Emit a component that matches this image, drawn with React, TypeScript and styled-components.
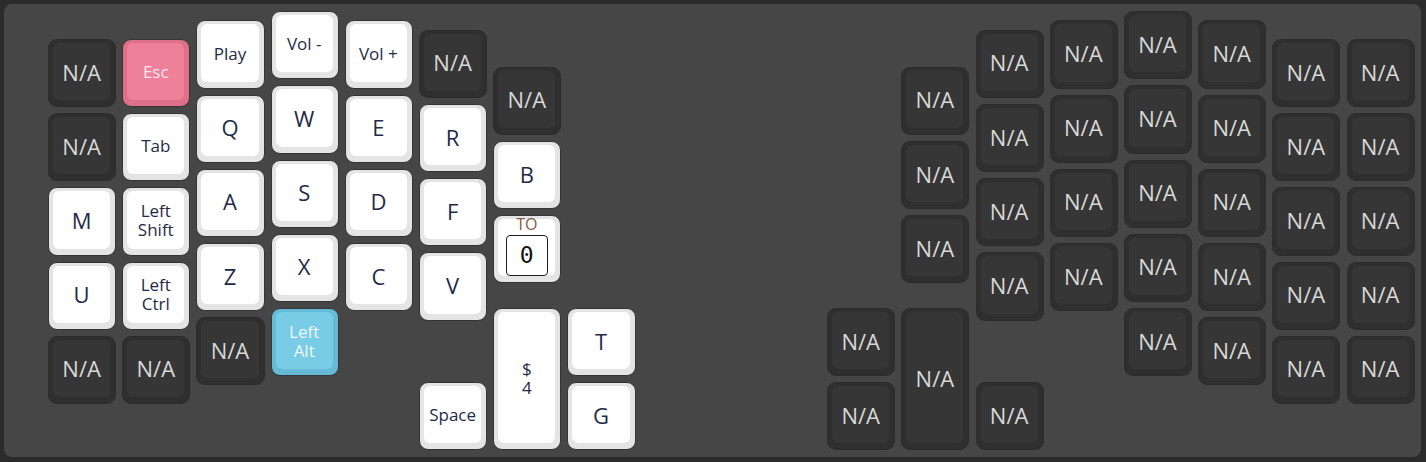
import React from "react";
import styled, { createGlobalStyle, css } from "styled-components";

const GlobalStyle = createGlobalStyle`
  html, body {
    margin: 0;
    padding: 0;
    background: #2b2b2b;
  }
  body {
    font-family: "Open Sans", "Lato", sans-serif;
  }
`;

const UNIT = 74.2;
const GAP = 6;

type Tone = "dark" | "light" | "pink" | "blue";

interface KeyDef {
  c: number;
  r: number;
  h?: number;
  label?: string;
  tone?: Tone;
  small?: boolean;
  layer?: string;
}

const tones = {
  dark: { ring: "#2f2f2f", face: "#363636", text: "#d8d8d8", edge: "#2c2c2c" },
  light: { ring: "#e4e4e4", face: "#ffffff", text: "#1f2a48", edge: "#343434" },
  pink: { ring: "#de7189", face: "#ee8199", text: "#fce6eb", edge: "#3a3435" },
  blue: { ring: "#66bad6", face: "#78cce6", text: "#eef8fc", edge: "#34393b" },
};

const Board = styled.div`
  position: relative;
  margin: 4px;
  width: 1417px;
  height: 453px;
  background: #464646;
  border-radius: 8px;
  overflow: hidden;
`;

const Key = styled.div<{ $tone: Tone }>`
  position: absolute;
  box-sizing: border-box;
  border-radius: 9px;
  padding: 3px 5px 6px 4px;
  ${({ $tone }) => css`
    background: ${tones[$tone].ring};
    border: 1px solid ${tones[$tone].edge};
    color: ${tones[$tone].text};
  `}
`;

const Face = styled.div<{ $tone: Tone; $small?: boolean }>`
  height: 100%;
  border-radius: 6px;
  background: ${({ $tone }) => tones[$tone].face};
  display: flex;
  flex-direction: column;
  align-items: center;
  justify-content: center;
  text-align: center;
  white-space: pre-line;
  font-size: ${({ $small }) => ($small ? "17px" : "22px")};
  line-height: ${({ $small }) => ($small ? "19px" : "26px")};
`;

const LayerName = styled.span`
  font-size: 16px;
  line-height: 17px;
  color: #7d5c46;
  margin-top: -4px;
`;

const LayerBox = styled.span`
  box-sizing: border-box;
  width: 42px;
  height: 41px;
  margin-top: 2px;
  border: 1px solid #1e1e1e;
  border-radius: 4px;
  background: #ffffff;
  display: flex;
  align-items: center;
  justify-content: center;
  font-family: "DejaVu Sans Mono", "Liberation Mono", monospace;
  font-size: 23px;
  color: #111;
`;

const na = (c: number, r: number, h?: number): KeyDef => ({ c, r, h, label: "N/A", tone: "dark" });
const k = (c: number, r: number, label: string, small = false, tone: Tone = "light"): KeyDef => ({
  c,
  r,
  label,
  small,
  tone,
});

const keys: KeyDef[] = [
  // left half
  na(0, 0), na(0, 1), k(0, 2, "M"), k(0, 3, "U"), na(0, 4),
  k(1, 0, "Esc", true, "pink"), k(1, 1, "Tab", true), k(1, 2, "Left\nShift", true), k(1, 3, "Left\nCtrl", true), na(1, 4),
  k(2, -0.25, "Play", true), k(2, 0.75, "Q"), k(2, 1.75, "A"), k(2, 2.75, "Z"), na(2, 3.75),
  k(3, -0.375, "Vol -", true), k(3, 0.625, "W"), k(3, 1.625, "S"), k(3, 2.625, "X"), k(3, 3.625, "Left\nAlt", true, "blue"),
  k(4, -0.25, "Vol +", true), k(4, 0.75, "E"), k(4, 1.75, "D"), k(4, 2.75, "C"),
  na(5, -0.125), k(5, 0.875, "R"), k(5, 1.875, "F"), k(5, 2.875, "V"), k(5, 4.625, "Space", true),
  na(6, 0.375), k(6, 1.375, "B"), { c: 6, r: 2.375, tone: "light", layer: "0" }, { c: 6, r: 3.625, h: 2, label: "$\n4", small: true, tone: "light" },
  k(7, 3.625, "T"), k(7, 4.625, "G"),
  // right half
  na(10.5, 3.625), na(10.5, 4.625),
  na(11.5, 0.375), na(11.5, 1.375), na(11.5, 2.375), na(11.5, 3.625, 2),
  na(12.5, -0.125), na(12.5, 0.875), na(12.5, 1.875), na(12.5, 2.875), na(12.5, 4.625),
  na(13.5, -0.25), na(13.5, 0.75), na(13.5, 1.75), na(13.5, 2.75),
  na(14.5, -0.375), na(14.5, 0.625), na(14.5, 1.625), na(14.5, 2.625), na(14.5, 3.625),
  na(15.5, -0.25), na(15.5, 0.75), na(15.5, 1.75), na(15.5, 2.75), na(15.5, 3.75),
  na(16.5, 0), na(16.5, 1), na(16.5, 2), na(16.5, 3), na(16.5, 4),
  na(17.5, 0), na(17.5, 1), na(17.5, 2), na(17.5, 3), na(17.5, 4),
];

const App = () => (
  <>
    <GlobalStyle />
    <Board>
      {keys.map((key, i) => {
        const tone = key.tone ?? "light";
        const h = key.h ?? 1;
        return (
          <Key
            key={i}
            $tone={tone}
            style={{
              left: 44 + key.c * UNIT,
              top: 35 + key.r * UNIT,
              width: UNIT - GAP,
              height: h * UNIT - GAP,
            }}
          >
            <Face $tone={tone} $small={key.small}>
              {key.layer !== undefined ? (
                <>
                  <LayerName>TO</LayerName>
                  <LayerBox>{key.layer}</LayerBox>
                </>
              ) : (
                key.label
              )}
            </Face>
          </Key>
        );
      })}
    </Board>
  </>
);

export default App;
